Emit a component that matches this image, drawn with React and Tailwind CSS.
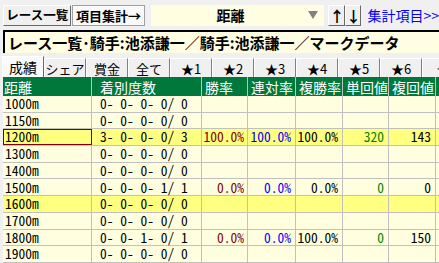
import React from 'react';

const rows = [
  { d: '1000m', c: '0- 0- 0- 0/ 0' },
  { d: '1150m', c: '0- 0- 0- 0/ 0' },
  { d: '1200m', c: '3- 0- 0- 0/ 3', w: '100.0%', r: '100.0%', f: '100.0%', t: '320', p: '143', hl: true, sel: true },
  { d: '1300m', c: '0- 0- 0- 0/ 0' },
  { d: '1400m', c: '0- 0- 0- 0/ 0' },
  { d: '1500m', c: '0- 0- 0- 1/ 1', w: '0.0%', r: '0.0%', f: '0.0%', t: '0', p: '0' },
  { d: '1600m', c: '0- 0- 0- 0/ 0', hl: true },
  { d: '1700m', c: '0- 0- 0- 0/ 0' },
  { d: '1800m', c: '0- 0- 1- 0/ 1', w: '0.0%', r: '0.0%', f: '100.0%', t: '0', p: '150' },
  { d: '1900m', c: '0- 0- 0- 0/ 0' },
];

const tabs = ['成績', 'シェア', '賞金', '全て', '★1', '★2', '★3', '★4', '★5', '★6', '★'];

const heads = ['距離', '着別度数', '勝率', '連対率', '複勝率', '単回値', '複回値', ''];

const cols = 'grid grid-cols-[89px_110px_46px_48px_47px_46px_47px_60px]';
const jp = "font-['Noto_Sans_CJK_JP',sans-serif]";
const mono = "font-['Noto_Sans_Mono_CJK_JP','Liberation_Mono',monospace]";
const raised = 'bg-[#f0f0f0] border border-t-white border-l-white border-r-[#696969] border-b-[#696969]';

export default function App() {
  return (
    <div className={`w-[439px] h-[263px] overflow-hidden bg-[#f0f0f0] ${jp} text-black`}>
      {/* 上段ツールバー */}
      <div className="flex items-center h-[29px] pl-[3px] pt-[1px] whitespace-nowrap">
        <div className={`w-[73px] h-[21px] flex items-center justify-center ${raised} font-bold text-[12.5px] leading-none`}>
          レース一覧
        </div>
        <div className="w-[77px] h-[21px] ml-[1px] flex items-center justify-center bg-[#fafafa] border border-[#a0a0a0] font-bold text-[13px] leading-none">
          項目集計→
        </div>
        <div className="w-[186px] h-[21px] ml-[6px] bg-[#fffde2] flex items-center">
          <span className="flex-1 text-center font-bold text-[14px] leading-none pl-[2px]">距離</span>
          <svg width="10" height="8" viewBox="0 0 10 8" className="mr-[6px]">
            <polygon points="0,0 10,0 5,8" fill="#808080" />
          </svg>
        </div>
        <div className={`w-[17px] h-[21px] ml-[4px] flex items-center justify-center ${raised} font-bold text-[15px] leading-none`}>↑</div>
        <div className={`w-[16px] h-[21px] flex items-center justify-center ${raised} font-bold text-[15px] leading-none`}>↓</div>
        <span className="ml-[6px] text-[14px] text-[#0000ff] leading-none">集計項目&gt;&gt;</span>
      </div>

      {/* タイトル */}
      <div className="ml-[3px] mt-[1px] h-[23px] bg-[#fffde2] border-t-2 border-l-2 border-black flex items-center pl-[3px] whitespace-nowrap overflow-hidden">
        <span className="font-bold text-[15px] leading-none">レース一覧･騎手:池添謙一／騎手:池添謙一／マークデータ</span>
      </div>

      {/* タブ */}
      <div className="flex items-end h-[24px] pl-[2px] whitespace-nowrap overflow-hidden">
        {tabs.map((t, i) => (
          <div
            key={t}
            className={
              i === 0
                ? 'w-[42px] h-[21px] shrink-0 flex items-center justify-center bg-[#fafafa] border-t border-l border-white border-r border-r-[#696969] text-[14px] leading-none'
                : 'w-[42px] h-[19px] shrink-0 flex items-center justify-center bg-[#f0f0f0] border-t border-l border-white border-r border-r-[#808080] text-[13px] leading-none'
            }
          >
            {t}
          </div>
        ))}
      </div>

      {/* 表 */}
      <div className="ml-[3px] w-[500px] bg-[#ffffe0]">
        <div className={`${cols} h-[19px] bg-[#00783c] text-white text-[14px] leading-none`}>
          {heads.map((h, i) => (
            <div
              key={i}
              className={`border-r border-[#c0c0c0] flex items-center whitespace-nowrap overflow-hidden ${i === 0 ? 'pl-[1px]' : i === 1 ? 'pl-[8px]' : 'pl-[3px]'}`}
            >
              {h}
            </div>
          ))}
        </div>
        {rows.map((r) => (
          <div key={r.d} className={`${cols} h-[16.7px] border-b border-[#c0c0c0] ${mono} text-[13.5px] leading-none whitespace-nowrap ${r.hl ? 'bg-[#ffff80]' : ''}`}>
            <div className={`border-r border-[#c0c0c0] flex items-center pl-[2px] ${r.sel ? 'outline outline-1 -outline-offset-1 outline-[#800000]' : ''}`}>{r.d}</div>
            <div className="border-r border-[#c0c0c0] flex items-center pl-[8px] whitespace-pre">{r.c}</div>
            <div className="border-r border-[#c0c0c0] flex items-center justify-end pr-[3px] text-[#800000]">{r.w}</div>
            <div className="border-r border-[#c0c0c0] flex items-center justify-end pr-[4px] text-[#0000ff]">{r.r}</div>
            <div className="border-r border-[#c0c0c0] flex items-center justify-end pr-[4px]">{r.f}</div>
            <div className="border-r border-[#c0c0c0] flex items-center justify-end pr-[4px] text-[#008000]">{r.t}</div>
            <div className="border-r border-[#c0c0c0] flex items-center justify-end pr-[4px]">{r.p}</div>
            <div className="border-r border-[#c0c0c0]"></div>
          </div>
        ))}
      </div>
    </div>
  );
}
